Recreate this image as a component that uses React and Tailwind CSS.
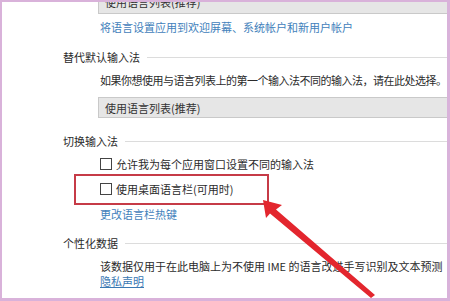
import React from "react";

const font = { fontFamily: '"Noto Sans CJK SC", "Noto Sans", sans-serif' };

function Heading({ children, className = "" }) {
  return (
    <div className={`flex items-center h-[16px] pl-[61px] ${className}`}>
      <span className="text-[11px] leading-[16px] text-[#2b2b2b] whitespace-nowrap">{children}</span>
      <div className="ml-[7px] flex-1 h-px bg-[#dcdcdc]" />
    </div>
  );
}

function Check({ children, className = "" }) {
  return (
    <div className={`flex items-center h-[16px] pl-[98px] ${className}`}>
      <span className="w-[12px] h-[12px] border border-[#444] bg-white shrink-0" />
      <span className="ml-[4px] text-[11px] leading-[16px] text-[#2b2b2b] whitespace-nowrap">{children}</span>
    </div>
  );
}

export default function App() {
  return (
    <div className="w-[450px] h-[301px] bg-[#d9b2da] pl-[2px] pt-[2px] pr-[3px] pb-[3px]" style={font}>
      <div className="relative w-full h-full bg-white overflow-hidden">
        <div className="flex flex-col">
          <div className="ml-[96px] -mt-[8px] h-[20px] bg-[#e6e6e6] border border-[#c9c9c9] border-r-0 flex items-end pl-[6px]">
            <span className="text-[11px] leading-[13px] text-[#333] mb-[4px] whitespace-nowrap">使用语言列表(推荐)</span>
          </div>
          <div className="mt-[5px] pl-[98px] h-[16px] text-[11px] leading-[16px] text-[#4281bb] whitespace-nowrap">
            将语言设置应用到欢迎屏幕、系统帐户和新用户帐户
          </div>
          <Heading className="mt-[14px]">替代默认输入法</Heading>
          <div className="mt-[7px] pl-[98px] h-[16px] text-[11px] leading-[16px] tracking-[-0.5px] text-[#2b2b2b] whitespace-nowrap">
            如果你想使用与语言列表上的第一个输入法不同的输入法，请在此处选择。
          </div>
          <div className="mt-[9px] ml-[96px] h-[21px] bg-[#e6e6e6] border border-[#c9c9c9] border-r-0 flex items-center pl-[6px]">
            <span className="text-[11px] leading-[16px] text-[#333] whitespace-nowrap">使用语言列表(推荐)</span>
          </div>
          <Heading className="mt-[15px]">切换输入法</Heading>
          <Check className="mt-[7px]">允许我为每个应用窗口设置不同的输入法</Check>
          <Check className="mt-[9px]">使用桌面语言栏(可用时)</Check>
          <div className="mt-[9px] pl-[98px] h-[16px] text-[11px] leading-[16px] text-[#4281bb] whitespace-nowrap">
            更改语言栏热键
          </div>
          <Heading className="mt-[13px]">个性化数据</Heading>
          <div className="mt-[8px] pl-[98px] h-[15px] text-[11px] leading-[15px] text-[#2b2b2b] whitespace-nowrap">
            该数据仅用于在此电脑上为不使用 IME 的语言改进手写识别及文本预测
          </div>
          <div className="pl-[98px] h-[15px] text-[11px] leading-[15px] whitespace-nowrap">
            <span className="text-[#3a78b3] underline">隐私声明</span>
          </div>
        </div>

        <div className="absolute left-[72px] top-[172px] w-[195px] h-[31px] border-2 border-[#c63b47]" />

        <svg className="absolute left-0 top-0" width="445" height="296" viewBox="0 0 445 296">
          <polygon
            points="261,198 280,203 274,207.5 373,293 369,296 268,211.5 264,216"
            fill="#e3262e"
          />
        </svg>
      </div>
    </div>
  );
}
